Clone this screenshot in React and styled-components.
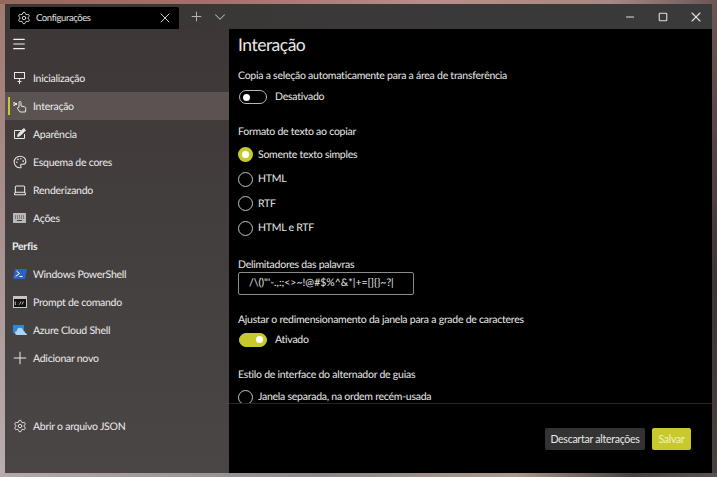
import React from "react";
import styled, { createGlobalStyle } from "styled-components";
import { Settings, Plus, ChevronDown, X, Minus, Square, Menu, Palette, Laptop } from "lucide-react";

const GlobalStyle = createGlobalStyle`
  html, body { margin: 0; padding: 0; height: 100%; }
  body {
    font-family: Lato, "Open Sans", sans-serif;
    letter-spacing: -0.25px;
    text-rendering: geometricPrecision;
    background: #3a3233;
    overflow: hidden;
  }
`;

const Desktop = styled.div`
  width: 717px;
  height: 477px;
  box-sizing: border-box;
  padding: 4px 5px;
  background:
    linear-gradient(90deg, #96685c 0%, #a5706a 30%, #b98d88 60%, #a88884 85%, #6a5654 100%) top / 100% 4px no-repeat,
    linear-gradient(90deg, #b4aaaa 0%, #8e8686 45%, #a69a8c 72%, #4a4040 88%, #5a5050 100%) bottom / 100% 4px no-repeat,
    linear-gradient(180deg, #a07a70 0%, #a89290 50%, #b8aeae 100%) left / 5px 100% no-repeat,
    linear-gradient(180deg, #6a5654 0%, #3e3434 60%, #4a4040 100%) right / 5px 100% no-repeat;
`;

const Win = styled.div`
  width: 707px;
  height: 469px;
  display: flex;
  flex-direction: column;
  background: #000;
`;

const TitleBar = styled.div`
  height: 25px;
  flex: none;
  display: flex;
  align-items: flex-end;
  padding-left: 5px;
  background: linear-gradient(90deg, #3c3636 0%, #3a3838 50%, #3a3a3a 100%);
  color: #cfcfcf;
`;

const Tab = styled.div`
  width: 169px;
  height: 22px;
  display: flex;
  align-items: center;
  background: #000;
  color: #e0e0e0;
  font-size: 9.5px;
  letter-spacing: -0.4px;
  padding: 0 6px 0 7px;
  box-sizing: border-box;
  gap: 5px;
  border-radius: 2px 2px 0 0;
`;

const TabLabel = styled.span`
  flex: 1;
`;

const TabAction = styled.span`
  display: flex;
  align-items: center;
  justify-content: center;
  width: 24px;
  height: 25px;
  color: #b4b4b4;
  margin-left: ${(p) => (p.$first ? "5px" : "0")};
`;

const Spacer = styled.div`
  flex: 1;
`;

const WinButton = styled.span`
  display: flex;
  align-items: center;
  justify-content: center;
  width: 33px;
  height: 25px;
  color: #e0e0e0;
`;

const Body = styled.div`
  flex: 1;
  display: flex;
  min-height: 0;
`;

const Sidebar = styled.nav`
  width: 224px;
  flex: none;
  display: flex;
  flex-direction: column;
  background: linear-gradient(180deg, #3e3737 0%, #454040 55%, #4a4646 100%);
  color: #ececec;
`;

const Burger = styled.div`
  height: 29px;
  display: flex;
  align-items: center;
  padding-left: 6px;
  margin-bottom: 6px;
  color: #f0f0f0;
`;

const Item = styled.div`
  position: relative;
  height: 28px;
  display: flex;
  align-items: center;
  font-size: 10.5px;
  background: ${(p) => (p.$active ? "#5a5352" : "transparent")};
  margin-top: ${(p) => (p.$bottom ? "auto" : "0")};
  margin-bottom: ${(p) => (p.$bottom ? "33px" : "0")};
  ${(p) => p.$active && `
    &::before {
      content: "";
      position: absolute;
      left: 3px;
      top: 5px;
      bottom: 5px;
      width: 2px;
      background: #c8c92c;
    }
  `}
`;

const IconSlot = styled.span`
  width: 28px;
  display: flex;
  justify-content: center;
  padding-left: 1px;
  box-sizing: border-box;
  color: #e8e8e8;
`;

const ItemLabel = styled.span`
  padding-top: 2px;
`;

const Section = styled.div`
  height: 28px;
  display: flex;
  align-items: center;
  padding: 2px 0 0 7px;
  box-sizing: border-box;
  font-size: 10.5px;
  font-weight: 700;
`;

const Main = styled.main`
  flex: 1;
  min-width: 0;
  display: flex;
  flex-direction: column;
  background: #000;
  color: #e8e8e8;
`;

const Scroll = styled.div`
  height: 374px;
  flex: none;
  overflow: hidden;
  padding-left: 9px;
  box-sizing: border-box;
`;

const Title = styled.h1`
  margin: 0;
  font-size: 17.5px;
  font-weight: 400;
  letter-spacing: -0.5px;
  line-height: 26px;
  padding-top: 3px;
  color: #e8e8e8;
`;

const Group = styled.section`
  margin-top: ${(p) => p.$top || 16}px;
`;

const Label = styled.div`
  font-size: 10.5px;
  line-height: 16px;
`;

const ToggleRow = styled.div`
  display: flex;
  align-items: center;
  gap: 8px;
  height: 20px;
  margin-top: ${(p) => p.$gap}px;
  font-size: 10.5px;
`;

const Toggle = styled.span`
  width: 28px;
  height: 14px;
  margin-left: 1px;
  box-sizing: border-box;
  border-radius: 7px;
  display: flex;
  align-items: center;
  justify-content: ${(p) => (p.$on ? "flex-end" : "flex-start")};
  padding: 0 3px;
  background: ${(p) => (p.$on ? "#c8c92c" : "transparent")};
  border: 1px solid ${(p) => (p.$on ? "#c8c92c" : "#b8b8b8")};
  &::after {
    content: "";
    width: 7px;
    height: 7px;
    border-radius: 50%;
    background: #fff;
  }
`;

const Radios = styled.div`
  margin-top: 2.5px;
`;

const RadioRow = styled.div`
  display: flex;
  align-items: center;
  gap: 5px;
  height: 24.5px;
  font-size: 10.5px;
`;

const Radio = styled.span`
  width: 15px;
  height: 15px;
  box-sizing: border-box;
  border-radius: 50%;
  border: ${(p) => (p.$on ? "4px solid #c8c92c" : "1px solid #c4c4c4")};
  background: ${(p) => (p.$on ? "#fff" : "transparent")};
`;

const Field = styled.div`
  width: 176px;
  height: 23px;
  box-sizing: border-box;
  margin-top: -1px;
  padding-left: 10px;
  display: flex;
  align-items: center;
  border: 1px solid #8c8c8c;
  border-radius: 2px;
  font-size: 10.5px;
  letter-spacing: 0;
  white-space: nowrap;
`;

const Footer = styled.footer`
  flex: 1;
  border-top: 1px solid #262626;
  display: flex;
  justify-content: flex-end;
  align-items: flex-start;
  gap: 7px;
  padding: 24px 21px 0 0;
`;

const Button = styled.button`
  height: 22px;
  width: ${(p) => (p.$primary ? "39px" : "100px")};
  padding: 0;
  border: 0;
  border-radius: 2px;
  font-family: inherit;
  font-size: 10.5px;
  letter-spacing: inherit;
  background: ${(p) => (p.$primary ? "#c8c92c" : "#333333")};
  color: ${(p) => (p.$primary ? "#f2f2c0" : "#e8e8e8")};
`;

const StartupIcon = () => (
  <svg width="13" height="14" viewBox="0 0 13 14" fill="none" stroke="currentColor" strokeWidth="1">
    <rect x="1.5" y="1.5" width="10" height="6" />
    <path d="M6.5 7.5V13M4.5 10.5h4" />
  </svg>
);

const HandIcon = () => (
  <svg width="14" height="14" viewBox="0 0 14 14" fill="none" stroke="currentColor" strokeWidth="1">
    <path d="M1 3l3 3M1 7l3-3M1 3v4" />
    <path d="M6 7V3.5a1 1 0 0 1 2 0V7l3.5 .8c1 .2 1.5 1 1.3 2L12.3 13H7L4.5 9.5c-.5-.8.5-1.6 1.3-.9z" />
  </svg>
);

const AppearanceIcon = () => (
  <svg width="14" height="14" viewBox="0 0 14 14" fill="none" stroke="currentColor" strokeWidth="1">
    <path d="M8 3.5H1.5v8h10V7" />
    <path d="M4.5 9.5l.8-2.5 5.5-5.5 1.7 1.7-5.5 5.5z" fill="currentColor" />
  </svg>
);

const KeyboardIcon = () => (
  <svg width="13" height="10" viewBox="0 0 13 10">
    <rect width="13" height="10" rx="0.5" fill="#b9b9b9" />
    <path d="M2 3h1M4 3h1M6 3h1M8 3h1M10 3h1M2 5h1M4 5h1M6 5h1M8 5h1M10 5h1M4 7.5h5" stroke="#453f3f" strokeWidth="1" />
  </svg>
);

const PowerShellIcon = () => (
  <svg width="14" height="12" viewBox="0 0 14 12">
    <path d="M2 1h12l-2 10H0z" fill="#2a63c4" />
    <path d="M3.5 3l3 2.5-4 3M6.5 8.5h3" stroke="#fff" strokeWidth="1" fill="none" />
  </svg>
);

const CmdIcon = () => (
  <svg width="14" height="12" viewBox="0 0 14 12">
    <rect x="0.5" y="0.5" width="13" height="11" fill="#111" stroke="#c4c4c4" />
    <rect x="1" y="1" width="12" height="2" fill="#c4c4c4" />
    <path d="M3 6H2.2v2.5H3M5 6.5v.3M5 8v.3M6.5 8.5L8 5.5M9 8.5L10.5 5.5" stroke="#e0e0e0" strokeWidth="0.8" fill="none" />
  </svg>
);

const AzureIcon = () => (
  <svg width="14" height="12" viewBox="0 0 14 12">
    <rect y="1" width="11" height="8" fill="#2f86d2" />
    <path d="M4 11a2 2 0 0 1 0-4 3 3 0 0 1 6-.5 2.3 2.3 0 0 1 2 2.2A2.3 2.3 0 0 1 14 11z" fill="#a9d6f2" />
  </svg>
);

const topItems = [
  { label: "Inicialização", icon: <StartupIcon /> },
  { label: "Interação", icon: <HandIcon />, active: true },
  { label: "Aparência", icon: <AppearanceIcon /> },
  { label: "Esquema de cores", icon: <Palette size={14} strokeWidth={1.8} /> },
  { label: "Renderizando", icon: <Laptop size={14} strokeWidth={1.8} /> },
  { label: "Ações", icon: <KeyboardIcon /> },
];

const profiles = [
  { label: "Windows PowerShell", icon: <PowerShellIcon /> },
  { label: "Prompt de comando", icon: <CmdIcon /> },
  { label: "Azure Cloud Shell", icon: <AzureIcon /> },
  { label: "Adicionar novo", icon: <Plus size={20} strokeWidth={1.2} /> },
];

const formats = ["Somente texto simples", "HTML", "RTF", "HTML e RTF"];

export default function App() {
  return (
    <Desktop>
      <GlobalStyle />
      <Win>
        <TitleBar>
          <Tab>
            <Settings size={14} strokeWidth={1.6} />
            <TabLabel>Configurações</TabLabel>
            <X size={16} strokeWidth={1.4} />
          </Tab>
          <TabAction $first><Plus size={15} strokeWidth={1.6} /></TabAction>
          <TabAction><ChevronDown size={18} strokeWidth={1.4} /></TabAction>
          <Spacer />
          <WinButton><Minus size={12} strokeWidth={2.2} /></WinButton>
          <WinButton><Square size={10} strokeWidth={2.6} /></WinButton>
          <WinButton><X size={16} strokeWidth={1.7} /></WinButton>
        </TitleBar>
        <Body>
          <Sidebar>
            <Burger><Menu size={16} strokeWidth={1.7} /></Burger>
            {topItems.map((it) => (
              <Item key={it.label} $active={it.active}>
                <IconSlot>{it.icon}</IconSlot>
                <ItemLabel>{it.label}</ItemLabel>
              </Item>
            ))}
            <Section>Perfis</Section>
            {profiles.map((it) => (
              <Item key={it.label}>
                <IconSlot>{it.icon}</IconSlot>
                <ItemLabel>{it.label}</ItemLabel>
              </Item>
            ))}
            <Item $bottom>
              <IconSlot><Settings size={14} strokeWidth={1.6} /></IconSlot>
              <ItemLabel>Abrir o arquivo JSON</ItemLabel>
            </Item>
          </Sidebar>
          <Main>
            <Scroll>
              <Title>Interação</Title>
              <Group $top={10}>
                <Label>Copia a seleção automaticamente para a área de transferência</Label>
                <ToggleRow $gap={3}><Toggle />Desativado</ToggleRow>
              </Group>
              <Group $top={17}>
                <Label>Formato de texto ao copiar</Label>
                <Radios>
                  {formats.map((f, i) => (
                    <RadioRow key={f}><Radio $on={i === 0} />{f}</RadioRow>
                  ))}
                </Radios>
              </Group>
              <Group $top={16}>
                <Label>Delimitadores das palavras</Label>
                <Field>{"/\\()\"'-.,:;<>~!@#$%^&*|+=[]{}~?|"}</Field>
              </Group>
              <Group $top={17}>
                <Label>Ajustar o redimensionamento da janela para a grade de caracteres</Label>
                <ToggleRow $gap={2}><Toggle $on />Ativado</ToggleRow>
              </Group>
              <Group $top={17}>
                <Label>Estilo de interface do alternador de guias</Label>
                <Radios>
                  <RadioRow><Radio />Janela separada, na ordem recém-usada</RadioRow>
                </Radios>
              </Group>
            </Scroll>
            <Footer>
              <Button>Descartar alterações</Button>
              <Button $primary>Salvar</Button>
            </Footer>
          </Main>
        </Body>
      </Win>
    </Desktop>
  );
}
